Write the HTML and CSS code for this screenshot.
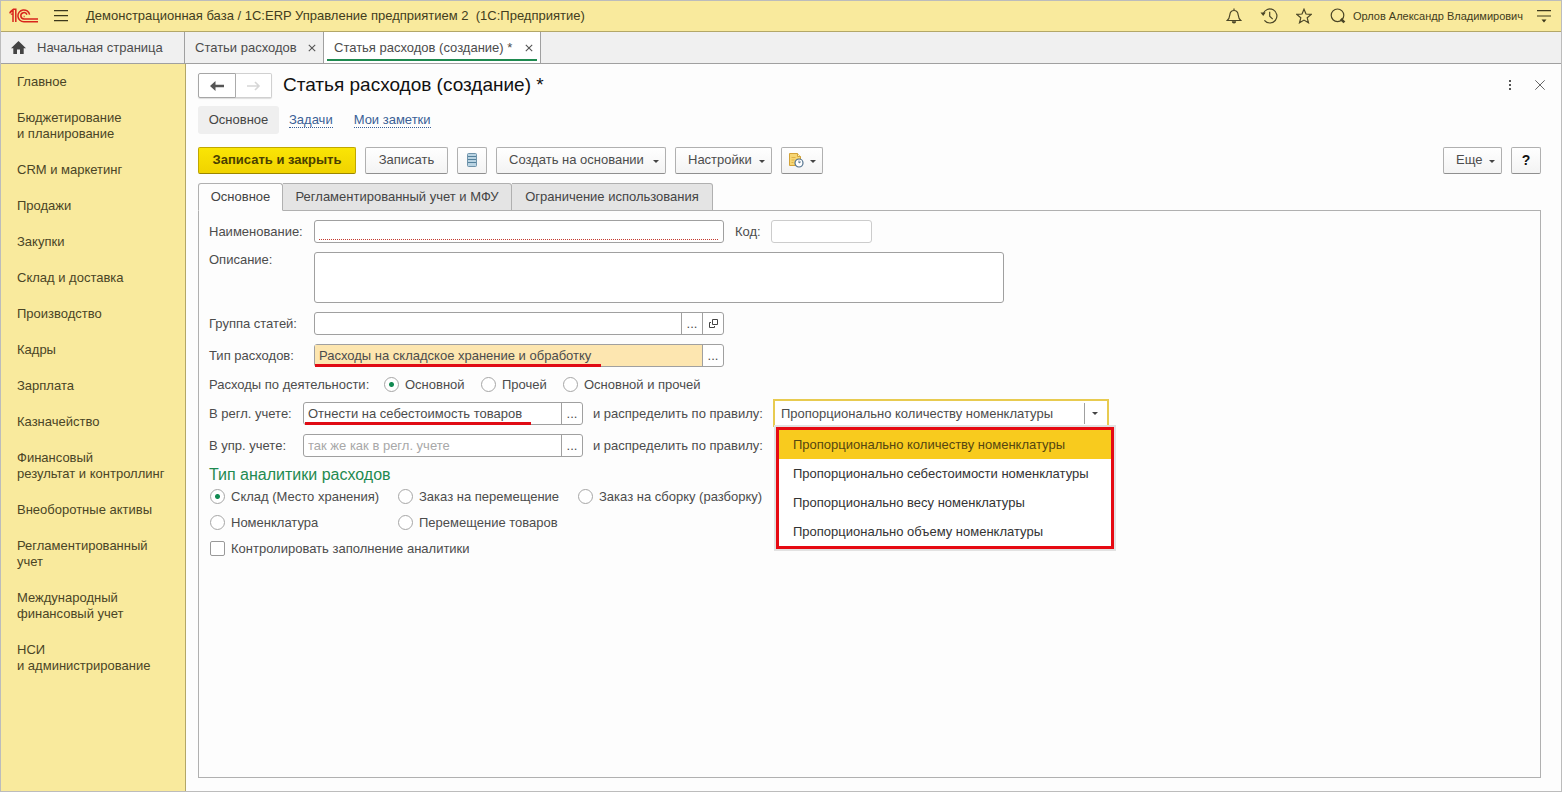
FILE: index.html
```html
<!DOCTYPE html>
<html lang="ru">
<head>
<meta charset="utf-8">
<title>Статья расходов (создание)</title>
<link rel="stylesheet" href="styles.css">
</head>
<body>
<div class="app">
  <header class="topbar">
    <svg class="logo" width="30" height="16" viewBox="0 0 30 16" fill="none" stroke="#d8251c" stroke-width="1.5">
      <path d="M.5 5.2 4 2.2V14M2.6 6.8V5.4M6.8 14V1.2H4.4L1 4"/>
      <path d="M20.6 6.6A5.9 5.9 0 1 0 15 13.7h14"/>
      <path d="M18 6.6a3.2 3.2 0 1 0-3 4.4h14"/>
      <path d="M15.6 8.4h-.9"/>
    </svg>
    <button class="icon-btn menu-btn" aria-label="Меню"><svg width="14" height="12" viewBox="0 0 14 12" stroke="#3c381c" stroke-width="1.2"><path d="M0 .6h14M0 5.6h14M0 10.6h14"/></svg></button>
    <div class="app-title">Демонстрационная база / 1С:ERP Управление предприятием 2&nbsp; (1С:Предприятие)</div>
    <nav class="top-icons" aria-label="Сервис">
      <button class="icon-btn" aria-label="Уведомления"><svg width="16" height="16" viewBox="0 0 16 16" fill="none" stroke="#4a4526" stroke-width="1.2"><path d="M1.2 12.500h13.600c-2-1.500-2.300-3-2.600-5.500C11.900 4 10.500 2.500 8 2.500S4.100 4 3.800 7c-.3 2.500-.6 4-2.600 5.500zM8 2.500V.6"/><path d="M5.800 13.200a2.200 2.200 0 0 0 4.400 0z" fill="#4a4526" stroke="none"/></svg></button>
      <button class="icon-btn" aria-label="История"><svg width="18" height="16" viewBox="0 0 18 16" fill="none" stroke="#4a4526" stroke-width="1.200"><path d="M3.200 6A7 7 0 1 1 4.400 12.300M9.700 3.800v4.400l3 3"/><path d="M.5 4.500h5.200L3.200 8z" fill="#4a4526" stroke="none"/></svg></button>
      <button class="icon-btn" aria-label="Избранное"><svg width="16" height="16" viewBox="0 0 16 16" fill="none" stroke="#4a4526" stroke-width="1.200"><path d="m8 1.200 2 4.800 5.200.4-4 3.400 1.300 5L8 12.100l-4.500 2.700 1.300-5-4-3.400L6 6z"/></svg></button>
      <button class="icon-btn" aria-label="Поиск"><svg width="16" height="16" viewBox="0 0 16 16" fill="none" stroke="#4a4526"><circle cx="7.500" cy="7.300" r="6.300" stroke-width="1.200"/><path d="m10.800 11 3.600 3.400" stroke-width="2.600"/></svg></button>
    </nav>
    <a class="user" href="#">Орлов Александр Владимирович</a>
    <button class="icon-btn" aria-label="Настройки окна"><svg width="14" height="14" viewBox="0 0 14 14" stroke="#3c381c" stroke-width="1.200"><path d="M0 1.600h14M0 7h14"/><path d="M4.500 10.500h5L7 13.500z" fill="#3c381c" stroke="none"/></svg></button>
  </header>

  <nav class="window-tabs" aria-label="Открытые окна">
    <a class="wtab home" href="#"><svg width="15" height="13" viewBox="0 0 15 13" fill="#444"><path d="M7.500 0 15 7.200h-2.300V13H9V8.500H6V13H2.300V7.200H0z"/></svg>Начальная страница</a>
    <div class="wtab list"><a href="#">Статьи расходов</a><button class="icon-btn" aria-label="Закрыть"><svg width="8" height="8" viewBox="0 0 8 8" stroke="#555" stroke-width="1.100"><path d="m.8.8 6.400 6.400M7.200.8.800 7.200"/></svg></button></div>
    <div class="wtab active"><a href="#">Статья расходов (создание) *</a><button class="icon-btn" aria-label="Закрыть"><svg width="8" height="8" viewBox="0 0 8 8" stroke="#555" stroke-width="1.100"><path d="m.8.8 6.400 6.400M7.200.8.800 7.200"/></svg></button></div>
  </nav>

  <div class="body">
    <nav class="sidebar" aria-label="Разделы">
      <a href="#">Главное</a>
      <a href="#">Бюджетирование<br>и планирование</a>
      <a href="#">CRM и маркетинг</a>
      <a href="#">Продажи</a>
      <a href="#">Закупки</a>
      <a href="#">Склад и доставка</a>
      <a href="#">Производство</a>
      <a href="#">Кадры</a>
      <a href="#">Зарплата</a>
      <a href="#">Казначейство</a>
      <a href="#">Финансовый<br>результат и контроллинг</a>
      <a href="#">Внеоборотные активы</a>
      <a href="#">Регламентированный<br>учет</a>
      <a href="#">Международный<br>финансовый учет</a>
      <a href="#">НСИ<br>и администрирование</a>
    </nav>

    <main class="main">
      <div class="title-row">
        <div class="history">
          <button aria-label="Назад"><svg width="14" height="10" viewBox="0 0 14 10" fill="#555"><path d="M0 5 5.500 0v3.800H14v2.400H5.500V10z"/></svg></button>
          <button aria-label="Вперед" disabled><svg width="14" height="10" viewBox="0 0 14 10" fill="none" stroke="#d6d6d6" stroke-width="1.600"><path d="M0 5h12M8 1l4 4-4 4"/></svg></button>
        </div>
        <h1>Статья расходов (создание) *</h1>
        <button class="icon-btn" aria-label="Действия"><svg width="4" height="12" viewBox="0 0 4 12" fill="#555"><path d="M1 1h2v2H1zM1 5h2v2H1zM1 9h2v2H1z"/></svg></button>
        <button class="icon-btn" aria-label="Закрыть форму"><svg width="10" height="10" viewBox="0 0 10 10" stroke="#666"><path d="m.3.3 9.400 9.400M9.700.3.300 9.700"/></svg></button>
      </div>

      <nav class="subnav" aria-label="Навигация формы">
        <a class="current" href="#">Основное</a>
        <a href="#"><span>Задачи</span></a>
        <a href="#"><span>Мои заметки</span></a>
      </nav>

      <div class="toolbar">
        <button class="btn primary w-save-close">Записать и закрыть</button>
        <button class="btn w-save">Записать</button>
        <button class="btn w-icon" aria-label="Список"><svg width="10" height="14" viewBox="0 0 10 14"><rect x=".5" y=".5" width="9" height="13" rx="1" fill="#b9d3e2" stroke="#6f93aa"/><path d="M1 3.500h8M1 6.500h8M1 9.500h8" stroke="#54819c"/></svg></button>
        <button class="btn drop w-create">Создать на основании<i class="caret"></i></button>
        <button class="btn drop w-settings">Настройки<i class="caret"></i></button>
        <button class="btn drop w-report" aria-label="Отчеты"><svg width="16" height="16" viewBox="0 0 16 16"><path d="M1.500 1.500h8l3 3v9h-11z" fill="#f6d674" stroke="#d3a238"/><path d="M9.500 1.500v3h3" fill="#fff3c0" stroke="#d3a238"/><path d="M3.500 5.500h4M3.500 8h3M3.500 10.500h2" stroke="#e0b248"/><circle cx="11" cy="11" r="4" fill="#fff" stroke="#51718d" stroke-width="1.200"/><path d="M11 8.500V11l1.800-1.200" fill="none" stroke="#51718d"/></svg><i class="caret"></i></button>
        <span class="spacer"></span>
        <button class="btn drop w-more">Еще<i class="caret"></i></button>
        <button class="btn w-icon help">?</button>
      </div>

      <div class="page-tabs" role="tablist">
        <button class="ptab w-main selected" role="tab" aria-selected="true">Основное</button>
        <button class="ptab w-regl" role="tab" aria-selected="false">Регламентированный учет и МФУ</button>
        <button class="ptab w-limit" role="tab" aria-selected="false">Ограничение использования</button>
      </div>

      <form class="panel">
        <div class="row">
          <label class="lbl" for="name">Наименование:</label>
          <div class="field field-wide required"><input id="name" type="text"></div>
          <label class="lbl-code" for="code">Код:</label>
          <div class="field field-code"><input id="code" type="text"></div>
        </div>
        <div class="row top">
          <label class="lbl" for="desc">Описание:</label>
          <textarea class="desc" id="desc"></textarea>
        </div>
        <div class="row">
          <label class="lbl" for="group">Группа статей:</label>
          <div class="field field-wide"><input id="group" type="text"><button type="button" aria-label="Выбрать">...</button><button type="button" aria-label="Открыть"><svg width="9" height="9" viewBox="0 0 9 9" fill="none" stroke="#444"><path d="M3.500.5h5v5h-5zM2 3.500H.5v5h5V7"/></svg></button></div>
        </div>
        <div class="row">
          <label class="lbl" for="type">Тип расходов:</label>
          <div class="field field-wide filled"><input id="type" type="text" value="Расходы на складское хранение и обработку"><button type="button" aria-label="Выбрать">...</button><span class="mark mark-type"></span></div>
        </div>
        <div class="radios" role="radiogroup" aria-labelledby="activity">
          <span id="activity">Расходы по деятельности:</span>
          <label class="opt"><input type="radio" name="activity" checked>Основной</label>
          <label class="opt"><input type="radio" name="activity">Прочей</label>
          <label class="opt"><input type="radio" name="activity">Основной и прочей</label>
        </div>
        <div class="row">
          <label class="lbl short" for="regl">В регл. учете:</label>
          <div class="field field-rule"><input id="regl" type="text" value="Отнести на себестоимость товаров"><button type="button" aria-label="Выбрать">...</button><span class="mark mark-regl"></span></div>
          <label class="lbl-rule" for="rule">и распределить по правилу:</label>
          <div class="combo">
            <select id="rule">
              <option>Пропорционально количеству номенклатуры</option>
              <option>Пропорционально себестоимости номенклатуры</option>
              <option>Пропорционально весу номенклатуры</option>
              <option>Пропорционально объему номенклатуры</option>
            </select>
            <span class="arrow"><i class="caret"></i></span>
            <div class="popup" role="listbox" aria-label="Правило распределения">
              <button type="button" role="option" aria-selected="true" class="on">Пропорционально количеству номенклатуры</button>
              <button type="button" role="option" aria-selected="false">Пропорционально себестоимости номенклатуры</button>
              <button type="button" role="option" aria-selected="false">Пропорционально весу номенклатуры</button>
              <button type="button" role="option" aria-selected="false">Пропорционально объему номенклатуры</button>
            </div>
          </div>
        </div>
        <div class="row">
          <label class="lbl short" for="upr">В упр. учете:</label>
          <div class="field field-rule"><input id="upr" type="text" placeholder="так же как в регл. учете"><button type="button" aria-label="Выбрать">...</button></div>
          <span class="lbl-rule">и распределить по правилу:</span>
        </div>
        <section class="analytics">
          <h2>Тип аналитики расходов</h2>
          <div class="grid">
            <label class="opt"><input type="radio" name="kind" checked>Склад (Место хранения)</label>
            <label class="opt"><input type="radio" name="kind">Заказ на перемещение</label>
            <label class="opt"><input type="radio" name="kind">Заказ на сборку (разборку)</label>
            <label class="opt"><input type="radio" name="kind">Номенклатура</label>
            <label class="opt"><input type="radio" name="kind">Перемещение товаров</label>
          </div>
          <label class="opt"><input type="checkbox">Контролировать заполнение аналитики</label>
        </section>
      </form>
    </main>
  </div>
</div>
</body>
</html>
```
FILE: styles.css
```css
* { box-sizing: border-box; }

body {
  margin: 0;
  font: 13px/16px "Liberation Sans", Arial, sans-serif;
  color: #4c4c4c;
}

button, input, select, textarea {
  font: inherit;
  color: inherit;
  margin: 0;
}

a { color: inherit; text-decoration: none; white-space: nowrap; }
svg { display: block; flex: none; }
label, span { white-space: nowrap; }

.app {
  min-height: 100vh;
  display: flex;
  flex-direction: column;
  border: 1px solid #bcbcbc;
  background: #fdfdfd;
}

.icon-btn {
  display: flex;
  padding: 0;
  border: 0;
  background: none;
}

/* Top bar */
.topbar {
  display: flex;
  align-items: center;
  height: 31px;
  padding: 0 10px 0 8px;
  background: #f9ea9d;
  border-bottom: 1px solid #b3a768;
  color: #423d20;
}
.menu-btn { margin-left: 15px; }
.app-title { flex: 1; margin-left: 18px; white-space: nowrap; }
.top-icons { display: flex; gap: 18px; margin-right: 7px; }
.user { font-size: 11px; margin-right: 14px; }

/* Window tabs */
.window-tabs {
  display: flex;
  height: 32px;
  background: #f0f0f0;
  border-bottom: 1px solid #a0a0a0;
}
.wtab {
  display: flex;
  align-items: center;
  justify-content: space-between;
  border-right: 1px solid #a0a0a0;
}
.home { width: 184px; justify-content: flex-start; gap: 11px; padding-left: 10px; }
.list { width: 139px; padding: 0 7px 0 10px; }
.active {
  position: relative;
  width: 217px;
  padding: 0 7px 0 10px;
  background: #fff;
}
.active::after {
  content: "";
  position: absolute;
  left: 3px;
  right: 3px;
  bottom: 2px;
  height: 2px;
  background: #1f8a50;
}

.body { flex: 1; display: flex; }

/* Sections */
.sidebar {
  flex: none;
  width: 185px;
  display: flex;
  flex-direction: column;
  background: #f9ea9d;
  border-right: 1px solid #b3a768;
  color: #4a4526;
}
.sidebar a { padding: 10px 16px; }

.main {
  flex: 1;
  min-width: 0;
  display: flex;
  flex-direction: column;
  padding: 9px 20px 13px 12px;
}

/* Form header */
.title-row { display: flex; align-items: center; height: 25px; }
.title-row h1 {
  flex: 1;
  margin: 0 0 2px 11px;
  font-size: 19px;
  line-height: 24px;
  font-weight: normal;
  color: #111;
}
.title-row .icon-btn { margin-bottom: 2px; }
.title-row .icon-btn + .icon-btn { margin-left: 23px; margin-right: -4px; }
.history { display: flex; }
.history button {
  display: flex;
  align-items: center;
  justify-content: center;
  width: 38px;
  height: 25px;
  padding: 0;
  border: 1px solid #a6a6a6;
  border-radius: 2px 0 0 2px;
  background: #fff;
  box-shadow: 0 1px 1px #ddd;
}
.history button + button {
  width: 36px;
  border-color: #d0d0d0;
  border-left: 0;
  border-radius: 0 2px 2px 0;
}

.subnav { display: flex; align-items: center; gap: 21px; margin-top: 8px; color: #3a5f96; }
.subnav span { border-bottom: 1px dotted #3a5f96; }
.subnav .current {
  width: 81px;
  margin-right: -11px;
  padding: 6px 0;
  text-align: center;
  background: #efefef;
  border-radius: 3px;
  color: #444;
}

/* Commands */
.toolbar { display: flex; gap: 9px; margin-top: 13px; }
.spacer { flex: 1; }
.btn {
  display: flex;
  align-items: center;
  justify-content: center;
  height: 27px;
  padding: 0 0 2px;
  border: 1px solid #b0b0b0;
  border-bottom-color: #8f8f8f;
  border-radius: 2px;
  background: linear-gradient(#fff, #f3f3f3);
  white-space: nowrap;
}
.drop { justify-content: space-between; padding: 0 6px 2px 12px; }
.primary {
  background: linear-gradient(#fae505, #f0d300);
  border-color: #c0a700;
  border-bottom-color: #9b8600;
  color: #4a4000;
  font-weight: bold;
}
.help { color: #111; font-size: 14px; font-weight: bold; }
.w-save-close { width: 158px; }
.w-save { width: 83px; }
.w-icon { width: 30px; }
.w-create { width: 170px; }
.w-settings { width: 97px; }
.w-report { width: 42px; padding-left: 6px; }
.w-more { width: 59px; }
.caret {
  width: 0;
  height: 0;
  margin-top: 3px;
  border: 3px solid transparent;
  border-top-color: #444;
  border-bottom: 0;
}

/* Form pages */
.page-tabs { display: flex; margin-top: 9px; position: relative; }
.ptab {
  height: 28px;
  padding: 0;
  border: 1px solid #b0b0b0;
  border-left: 0;
  border-radius: 0 3px 0 0;
  background: #e4e4e4;
  color: #444;
}
.ptab.selected {
  border-left: 1px solid #b0b0b0;
  border-radius: 3px 3px 0 0;
  border-bottom-color: #fdfdfd;
  background: #fdfdfd;
}
.w-main { width: 85px; }
.w-regl { width: 229px; }
.w-limit { width: 201px; }

.panel {
  flex: 1;
  display: flex;
  flex-direction: column;
  gap: 9px;
  margin-top: -1px;
  padding: 9px 10px;
  border: 1px solid #b0b0b0;
}
.row { display: flex; align-items: center; }
.row.top { align-items: flex-start; }
.lbl { width: 105px; }
.lbl.short { width: 94px; }
.lbl-code { width: 36px; margin-left: 11px; }
.lbl-rule { width: 180px; margin-left: 10px; }

.field {
  position: relative;
  display: flex;
  height: 23px;
  border: 1px solid #a0a0a0;
  border-radius: 3px;
  background: #fff;
}
.field input {
  flex: 1;
  min-width: 0;
  padding: 0 4px;
  border: 0;
  background: none;
  outline: 0;
}
.field input::placeholder { color: #a8a8a8; }
.field button {
  display: flex;
  align-items: center;
  justify-content: center;
  width: 21px;
  padding: 0;
  border: 0;
  border-left: 1px solid #a0a0a0;
  background: none;
}
.filled input { background: #fde6b0; }
.field-wide { width: 410px; }
.field-code { width: 101px; border-color: #ccc; }
.field-rule { width: 280px; }
.required::after {
  content: "";
  position: absolute;
  left: 4px;
  right: 4px;
  bottom: 2px;
  height: 1px;
  background: repeating-linear-gradient(90deg, #c4392f 0 1px, #fff 1px 2px);
}
.desc {
  width: 690px;
  height: 51px;
  border: 1px solid #a0a0a0;
  border-radius: 3px;
  background: #fff;
  resize: none;
}
.mark { position: absolute; left: 0; bottom: -1px; height: 3px; background: #e00b14; }
.mark-type { width: 286px; }
.mark-regl { width: 226px; left: 1px; }

/* Choices */
.radios {
  display: grid;
  grid-template-columns: 174px 97px 82px max-content;
  align-items: center;
  height: 17px;
}
.opt { display: flex; align-items: center; gap: 6px; height: 17px; padding-left: 1px; }
.opt input {
  appearance: none;
  width: 15px;
  height: 15px;
  border: 1px solid #a6a6a6;
  border-radius: 50%;
  background: #fff;
}
.opt input[type="checkbox"] { border-radius: 2px; border-color: #999; }
.opt input:checked { background: radial-gradient(circle, #128a52 2px, #fff 3px); }

.combo {
  position: relative;
  width: 336px;
  height: 28px;
  margin: -3px 0 -2px;
}
.combo select {
  appearance: none;
  width: 100%;
  height: 100%;
  padding: 0 28px 0 6px;
  border: 2px solid #e8cb50;
  border-bottom-width: 0;
  border-radius: 0;
  background: #fff;
  outline: 0;
}
.arrow {
  position: absolute;
  top: 4px;
  right: 4px;
  bottom: 3px;
  width: 21px;
  display: flex;
  align-items: center;
  justify-content: center;
  border-left: 1px solid #a0a0a0;
  pointer-events: none;
}
.arrow .caret { margin-top: 0; }
.popup {
  position: absolute;
  z-index: 2;
  top: 100%;
  left: 3px;
  width: 338px;
  border: 3px solid #e60a12;
  background: #fff;
  box-shadow: 0 0 0 2px #e2e2e2;
}
.popup button {
  display: block;
  width: 100%;
  height: 29px;
  padding: 0 14px;
  border: 0;
  background: none;
  text-align: left;
  color: #333;
  white-space: nowrap;
}
.popup .on { background: #f8cb1e; color: #554610; }

.analytics { display: flex; flex-direction: column; gap: 9px; }
.analytics h2 {
  margin: 0 0 -5px;
  font-size: 16px;
  line-height: 18px;
  font-weight: normal;
  color: #1f8a50;
}
.grid {
  display: grid;
  grid-template-columns: 188px 180px max-content;
  row-gap: 9px;
}
```
